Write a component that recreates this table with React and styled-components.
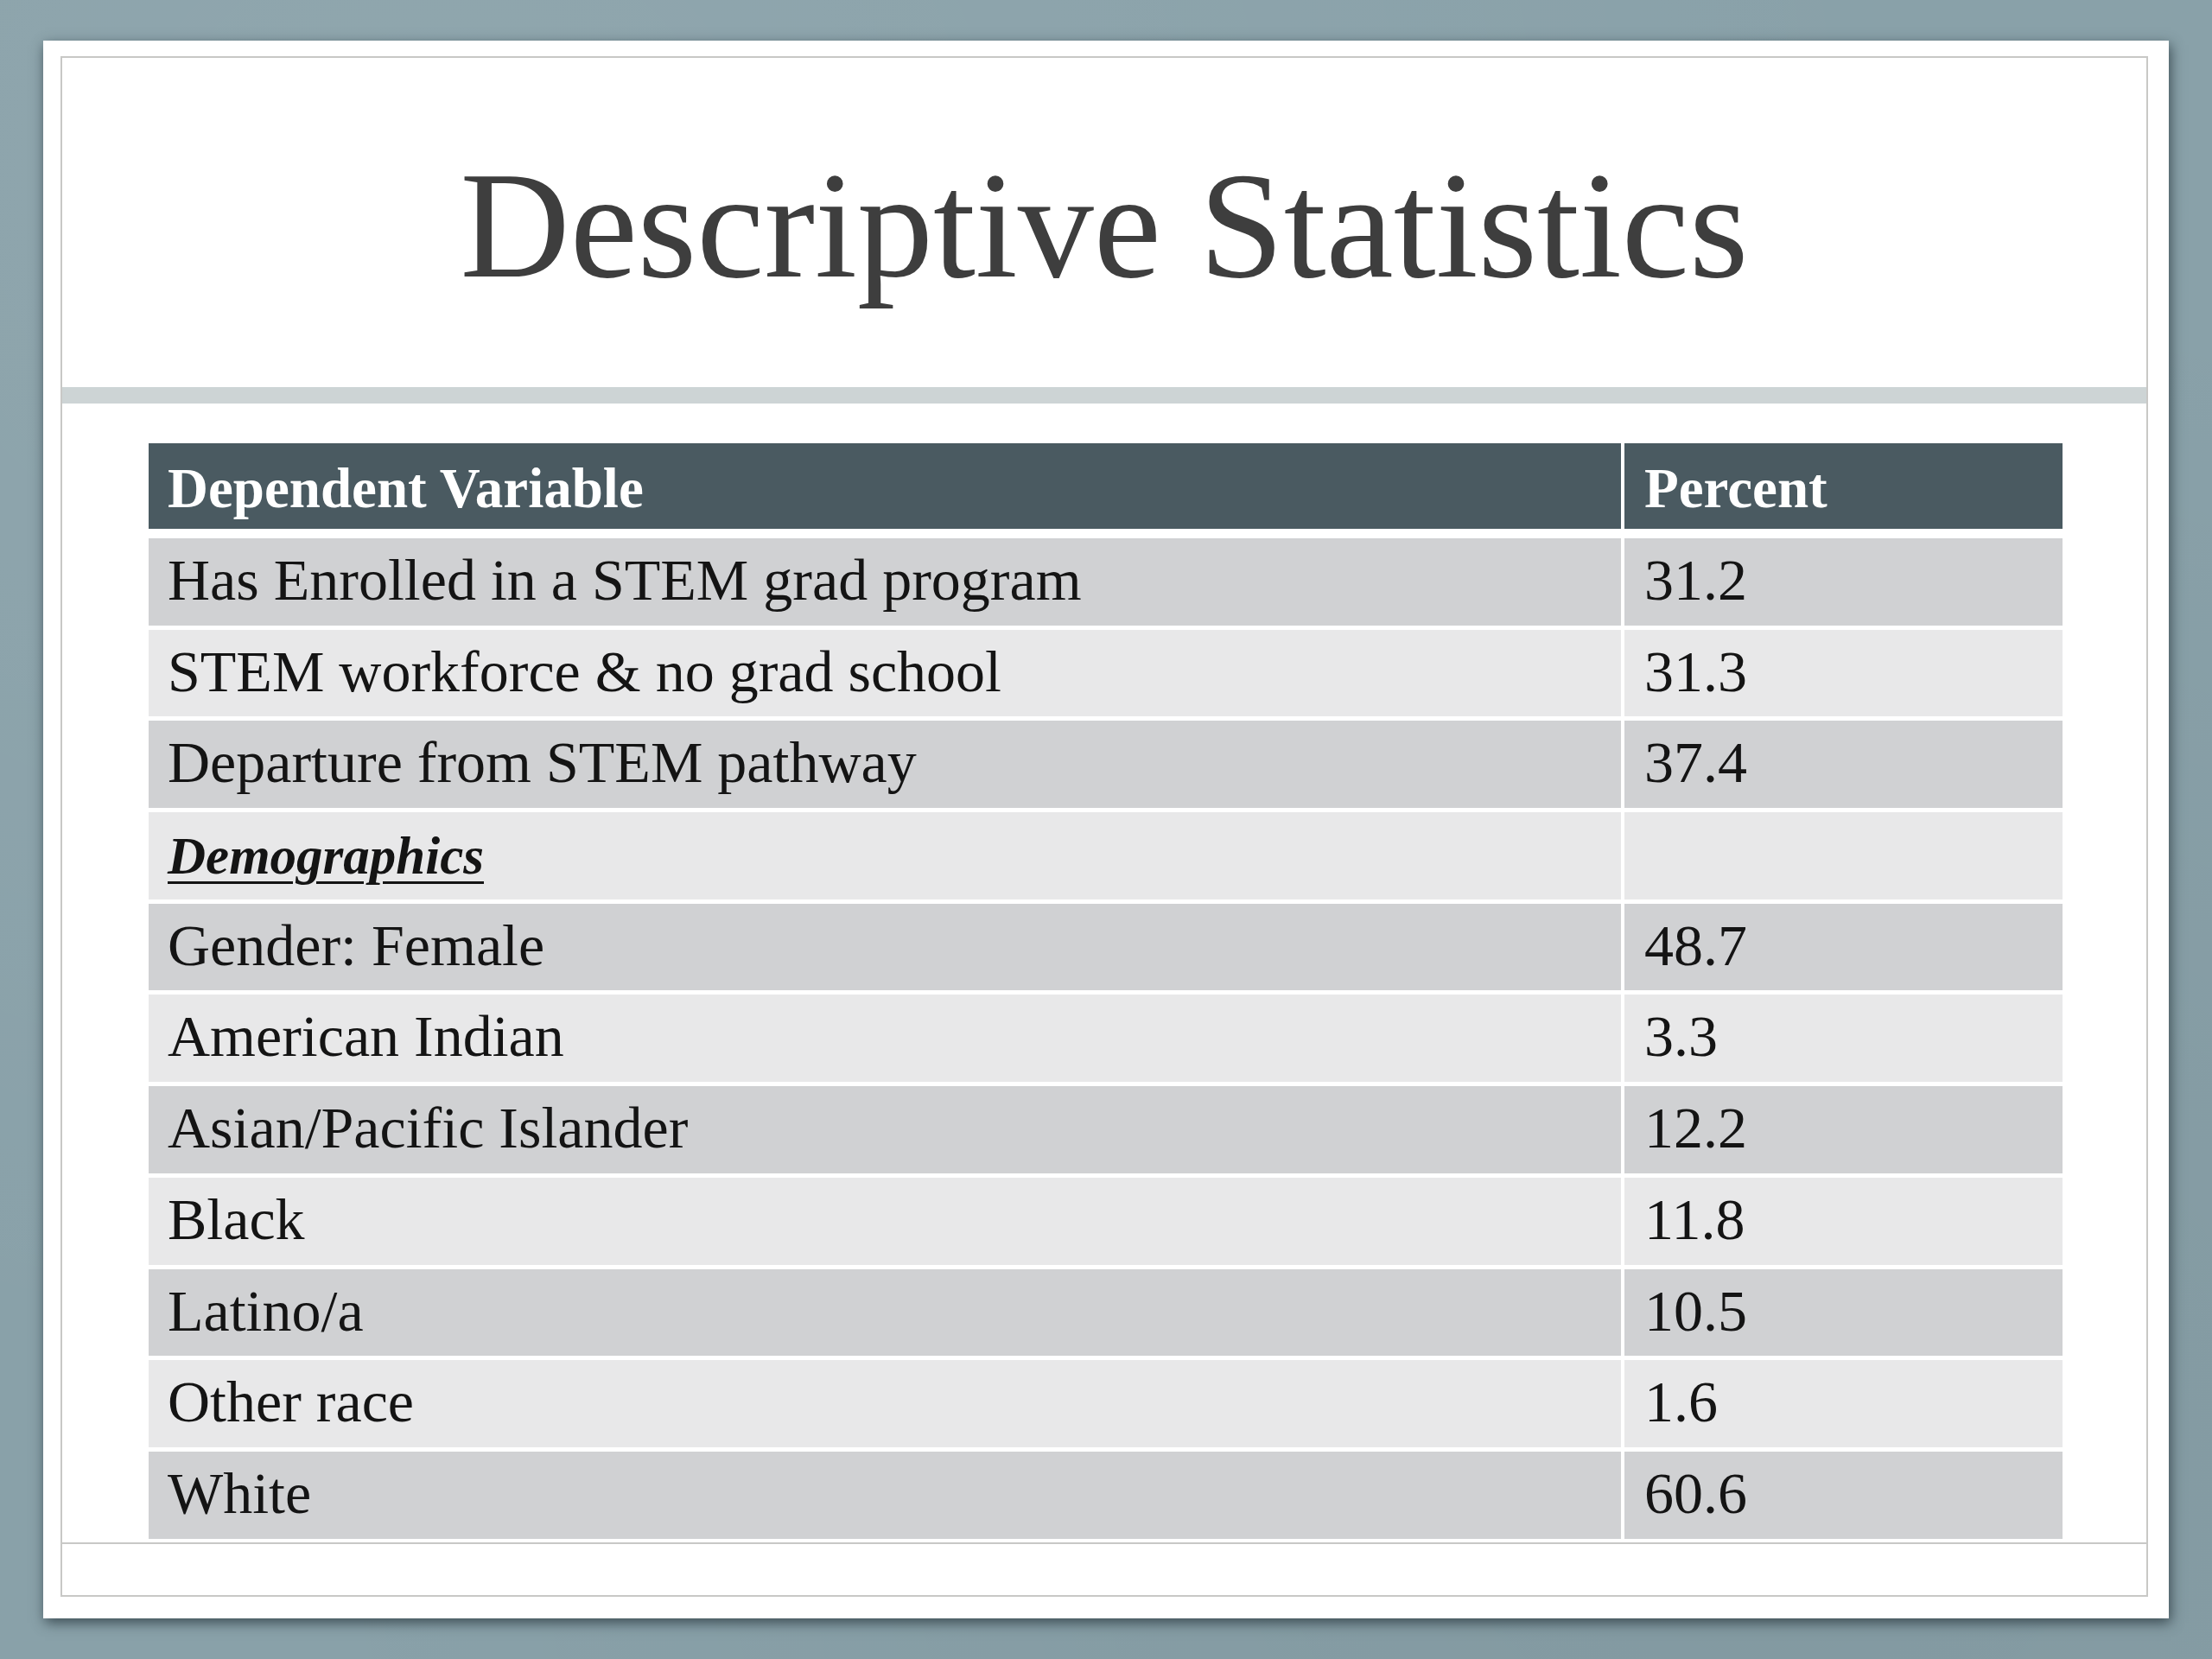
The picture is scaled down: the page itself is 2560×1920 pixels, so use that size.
import React from "react";
import styled, { createGlobalStyle } from "styled-components";

const Global = createGlobalStyle`
  html, body { margin: 0; padding: 0; }
  body {
    background: #89a1a9;
    font-family: "Liberation Serif", "Times New Roman", serif;
  }
`;

const Page = styled.div`
  width: 2560px;
  height: 1920px;
  box-sizing: border-box;
  padding: 47px 50px;
  background:
    radial-gradient(ellipse at 20% 10%, rgba(255,255,255,0.06), transparent 60%),
    radial-gradient(ellipse at 80% 90%, rgba(0,0,0,0.05), transparent 60%),
    #89a1a9;
`;

const Slide = styled.div`
  width: 2460px;
  height: 1826px;
  box-sizing: border-box;
  background: #ffffff;
  padding: 18px 24px 25px 20px;
  box-shadow: 2px 5px 14px rgba(35, 50, 56, 0.75);
  display: flex;
`;

const Frame = styled.div`
  flex: 1;
  border: 2px solid #c8c8c6;
  display: flex;
  flex-direction: column;
`;

const TitleArea = styled.div`
  height: 381px;
  box-sizing: border-box;
  padding-top: 93px;
  display: flex;
  justify-content: center;
`;

const Title = styled.h1`
  margin: 0;
  font-family: "Liberation Serif", "Times New Roman", serif;
  font-weight: normal;
  font-size: 176px;
  line-height: normal;
  color: #3e3e3e;
`;

const Bar = styled.div`
  height: 19px;
  background: #cdd4d5;
`;

const Content = styled.div`
  height: 1318px;
  box-sizing: border-box;
  padding: 46px 0 0 100px;
`;

const Grid = styled.div`
  width: 2215px;
  display: grid;
  grid-template-columns: 1704px 507px;
  column-gap: 4px;
  row-gap: 5px;
`;

const HeadCell = styled.div`
  background: #4a5a61;
  color: #ffffff;
  font-weight: bold;
  font-size: 65px;
  line-height: normal;
  height: 99px;
  box-sizing: border-box;
  padding: 15px 0 0 ${(p) => p.$pad}px;
  margin-bottom: 6px;
`;

const Cell = styled.div`
  background: ${(p) => (p.$dark ? "#d0d1d3" : "#e8e8e9")};
  color: #141414;
  font-size: 68px;
  line-height: normal;
  height: 100.7px;
  box-sizing: border-box;
  padding: 9px 0 0 ${(p) => p.$pad}px;
  white-space: nowrap;
`;

const Section = styled.span`
  font-weight: bold;
  font-style: italic;
  font-size: 61px;
  text-decoration: underline;
  text-decoration-thickness: 3px;
  text-underline-offset: 9px;
`;

const Footer = styled.div`
  flex: 1;
  border-top: 2px solid #c8c8c6;
`;

const rows = [
  ["Has Enrolled in a STEM grad program", "31.2"],
  ["STEM workforce & no grad school", "31.3"],
  ["Departure from STEM pathway", "37.4"],
  [null, ""],
  ["Gender: Female", "48.7"],
  ["American Indian", "3.3"],
  ["Asian/Pacific Islander", "12.2"],
  ["Black", "11.8"],
  ["Latino/a", "10.5"],
  ["Other race", "1.6"],
  ["White", "60.6"],
];

export default function App() {
  return (
    <>
      <Global />
      <Page>
        <Slide>
          <Frame>
            <TitleArea>
              <Title>Descriptive Statistics</Title>
            </TitleArea>
            <Bar />
            <Content>
              <Grid>
                <HeadCell $pad={22}>Dependent Variable</HeadCell>
                <HeadCell $pad={23}>Percent</HeadCell>
                {rows.map(([label, value], i) => (
                  <React.Fragment key={i}>
                    <Cell $dark={i % 2 === 0} $pad={22}>
                      {label === null ? <Section>Demographics</Section> : label}
                    </Cell>
                    <Cell $dark={i % 2 === 0} $pad={23}>
                      {value}
                    </Cell>
                  </React.Fragment>
                ))}
              </Grid>
            </Content>
            <Footer />
          </Frame>
        </Slide>
      </Page>
    </>
  );
}
